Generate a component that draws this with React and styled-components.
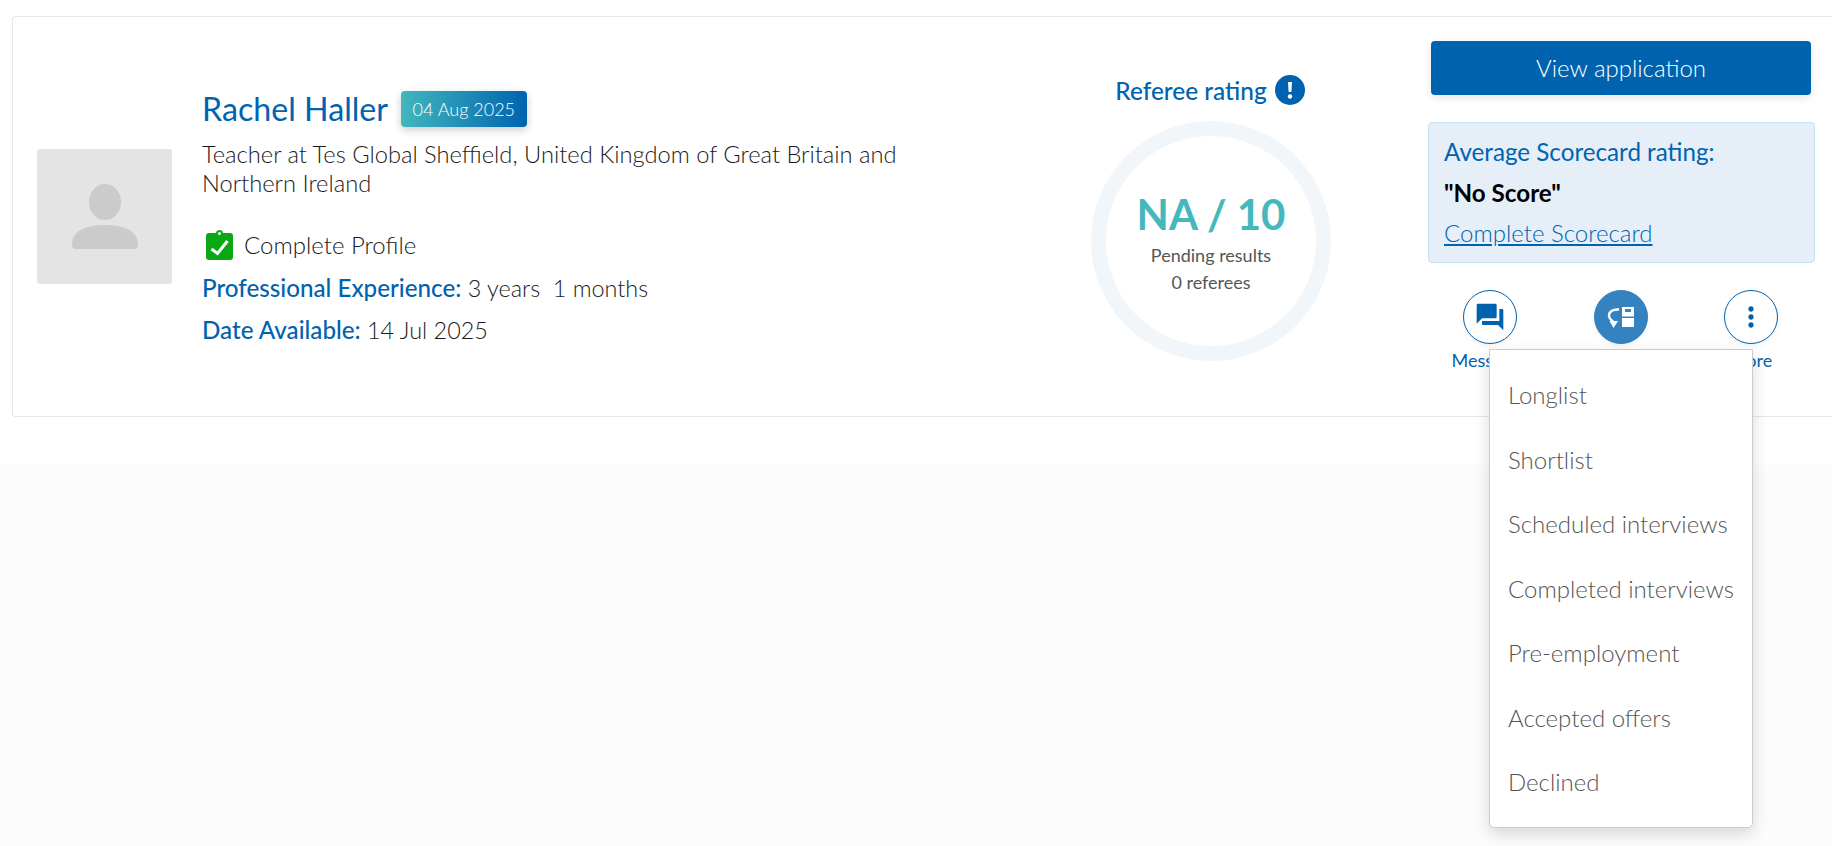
import React from "react";
import styled, { createGlobalStyle } from "styled-components";
import { MdQuestionAnswer, MdMoreVert } from "react-icons/md";

const blue = "#0063b0";

const GlobalStyle = createGlobalStyle`
  html, body {
    margin: 0;
    padding: 0;
    height: 100%;
    background: #fcfcfc;
    font-family: "Lato", "Liberation Sans", sans-serif;
    overflow: hidden;
  }
`;

const TopSection = styled.section`
  background: #fff;
  padding: 16px 0 48px 12px;
`;

const Card = styled.div`
  display: flex;
  align-items: stretch;
  box-sizing: border-box;
  height: 401px;
  padding: 24px 17px 0 24px;
  background: #fff;
  border: 1px solid #e6e6e6;
  border-right: none;
  border-radius: 4px 0 0 4px;
`;

const AvatarColumn = styled.div`
  display: flex;
  align-items: center;
  padding-bottom: 24px;
  margin-right: 30px;
`;

const Avatar = styled.div`
  display: flex;
  align-items: center;
  justify-content: center;
  width: 135px;
  height: 135px;
  background: #e4e4e4;
  border-radius: 3px;
`;

const Info = styled.div`
  flex: 1;
  padding-top: 49px;
  min-width: 0;
`;

const NameRow = styled.div`
  display: flex;
  align-items: center;
  gap: 13px;
`;

const Name = styled.a`
  color: ${blue};
  font-size: 32.2px;
  line-height: 38px;
`;

const DateBadge = styled.span`
  padding: 0 11.5px;
  height: 36px;
  line-height: 36px;
  color: #fff;
  font-size: 18px;
  font-weight: 300;
  border-radius: 4px;
  background: linear-gradient(90deg, #41b7bd, ${blue});
  box-shadow: 0 3px 8px rgba(0, 0, 0, 0.2);
`;

const Description = styled.p`
  margin: 11.5px 0 0;
  max-width: 720px;
  color: #1a1a1a;
  font-size: 23.7px;
  font-weight: 300;
  line-height: 29px;
`;

const ProfileRow = styled.div`
  display: flex;
  align-items: center;
  gap: 11px;
  margin: 32px 0 0 4px;
  color: #1a1a1a;
  font-size: 24px;
  font-weight: 300;
`;

const Detail = styled.div`
  margin-top: ${(p) => p.$top}px;
  color: #1a1a1a;
  font-size: 23.4px;
  font-weight: 300;
  line-height: 30px;
  white-space: pre;
`;

const DetailLabel = styled.span`
  color: ${blue};
  font-size: 24.2px;
  font-weight: 500;
`;

const RatingColumn = styled.div`
  display: flex;
  flex-direction: column;
  align-items: center;
  width: 240px;
  margin-right: 97px;
  padding-top: 34px;
`;

const RatingTitle = styled.div`
  display: flex;
  align-items: center;
  gap: 8px;
  height: 30px;
  padding-right: 2px;
  color: ${blue};
  font-size: 24.4px;
  font-weight: 500;
`;

const Ring = styled.div`
  display: flex;
  flex-direction: column;
  align-items: center;
  justify-content: center;
  box-sizing: border-box;
  width: 240px;
  height: 240px;
  margin-top: 16px;
  border: 15px solid #f1f6fb;
  border-radius: 50%;
`;

const Score = styled.div`
  color: #45b8bd;
  font-size: 42px;
  font-weight: 700;
  line-height: 55px;
`;

const RingNote = styled.div`
  color: #555;
  font-size: 18px;
  line-height: 27px;
`;

const ActionColumn = styled.div`
  width: 387px;
  flex-shrink: 0;
`;

const ViewButton = styled.button`
  display: block;
  box-sizing: border-box;
  width: 380px;
  height: 54px;
  margin: 0 0 0 3px;
  padding: 0 0 2px;
  color: #fff;
  font-family: inherit;
  font-size: 24px;
  font-weight: 300;
  background: ${blue};
  border: none;
  border-radius: 4px;
  box-shadow: 0 3px 8px rgba(0, 0, 0, 0.1);
`;

const ScoreBox = styled.div`
  box-sizing: border-box;
  height: 141px;
  margin-top: 27px;
  padding: 14px 15px;
  background: #e6eef7;
  border: 1px solid #c9dff2;
  border-radius: 4px;
`;

const ScoreLabel = styled.div`
  color: ${blue};
  font-size: 24.2px;
  line-height: 30px;
`;

const ScoreValue = styled.div`
  margin-top: 11px;
  color: #000;
  font-size: 24.2px;
  font-weight: 700;
  line-height: 30px;
`;

const ScoreLink = styled.a`
  display: inline-block;
  margin-top: 10px;
  color: ${blue};
  font-size: 24px;
  font-weight: 300;
  line-height: 30px;
  text-decoration: underline;
`;

const ActionRow = styled.div`
  display: flex;
  justify-content: space-between;
  margin: 27px 14px 0 12px;
`;

const Action = styled.div`
  display: flex;
  flex-direction: column;
  align-items: center;
  width: 100px;
`;

const ActionIcon = styled.div`
  display: flex;
  align-items: center;
  justify-content: center;
  box-sizing: border-box;
  width: 54px;
  height: 54px;
  color: ${(p) => (p.$active ? "#fff" : blue)};
  background: ${(p) => (p.$active ? "#3582c0" : "#fff")};
  border: 1px solid ${(p) => (p.$active ? "#3582c0" : blue)};
  border-radius: 50%;
  box-shadow: 0 2px 5px rgba(0, 0, 0, 0.06);
`;

const ActionLabel = styled.div`
  margin-top: 4px;
  color: ${blue};
  font-size: 18px;
  line-height: 24px;
`;

const PageWrap = styled.div`
  position: relative;
`;

const Menu = styled.ul`
  position: absolute;
  top: 349px;
  left: 1489px;
  width: 264px;
  box-sizing: border-box;
  margin: 0;
  padding: 13px 0 12px;
  list-style: none;
  background: #fff;
  border: 1px solid #ccc;
  border-radius: 0 0 5px 5px;
  box-shadow: 0 6px 16px rgba(0, 0, 0, 0.15);
`;

const MenuItem = styled.li`
  height: 64.5px;
  padding-left: 18px;
  color: #555;
  font-size: 24px;
  font-weight: 300;
  line-height: 64.5px;
`;

const PersonIcon = () => (
  <svg width="66" height="66" viewBox="0 0 66 66" fill="#cbcbcb">
    <ellipse cx="33" cy="18" rx="16" ry="18" />
    <path d="M0 60c0-14 16-19 33-19s33 5 33 19c0 3-1 5-4 5H4c-3 0-4-2-4-5z" />
  </svg>
);

const ClipboardIcon = () => (
  <svg width="27" height="30" viewBox="0 0 27 30">
    <path
      d="M3 3h7c0-4 7-4 7 0h7c2 0 3 1 3 3v21c0 2-1 3-3 3H3c-2 0-3-1-3-3V6c0-2 1-3 3-3z"
      fill="#0aa814"
    />
    <circle cx="13.500" cy="3.500" r="1.500" fill="#fff" />
    <path d="M5.500 19l6 4.500L21.500 11" fill="none" stroke="#fff" strokeWidth="3" />
  </svg>
);

const AlertIcon = () => (
  <svg width="30" height="30" viewBox="0 0 30 30">
    <circle cx="15" cy="15" r="15" fill={blue} />
    <path d="M13 7h4l-.6 10h-2.800z" fill="#fff" />
    <circle cx="15" cy="21.500" r="2.200" fill="#fff" />
  </svg>
);

const MoveIcon = () => (
  <svg width="30" height="30" viewBox="0 0 30 30" fill="#fff">
    <path d="M16 5h12v9.500H16zM19 7v3h6V7z" fillRule="evenodd" />
    <path d="M16 16h12v9H16z" />
    <path
      d="M13 7.500C6.500 7 2.800 10 3 14c.1 2 2 4 4.500 6"
      fill="none"
      stroke="#fff"
      strokeWidth="2.400"
    />
    <path d="M3.500 19H12l-4.500 7z" />
  </svg>
);

const stages = [
  "Longlist",
  "Shortlist",
  "Scheduled interviews",
  "Completed interviews",
  "Pre-employment",
  "Accepted offers",
  "Declined",
];

export default function App() {
  return (
    <>
      <GlobalStyle />
      <PageWrap>
        <TopSection>
          <Card>
            <AvatarColumn>
              <Avatar>
                <PersonIcon />
              </Avatar>
            </AvatarColumn>
            <Info>
              <NameRow>
                <Name>Rachel Haller</Name>
                <DateBadge>04 Aug 2025</DateBadge>
              </NameRow>
              <Description>
                Teacher at Tes Global Sheffield, United Kingdom of Great Britain
                and Northern Ireland
              </Description>
              <ProfileRow>
                <ClipboardIcon />
                Complete Profile
              </ProfileRow>
              <Detail $top={13}>
                <DetailLabel>Professional Experience:</DetailLabel> 3 years  1 months
              </Detail>
              <Detail $top={12}>
                <DetailLabel>Date Available:</DetailLabel> 14 Jul 2025
              </Detail>
            </Info>
            <RatingColumn>
              <RatingTitle>
                Referee rating
                <AlertIcon />
              </RatingTitle>
              <Ring>
                <Score>NA / 10</Score>
                <RingNote>Pending results</RingNote>
                <RingNote>0 referees</RingNote>
              </Ring>
            </RatingColumn>
            <ActionColumn>
              <ViewButton>View application</ViewButton>
              <ScoreBox>
                <ScoreLabel>Average Scorecard rating:</ScoreLabel>
                <ScoreValue>"No Score"</ScoreValue>
                <ScoreLink>Complete Scorecard</ScoreLink>
              </ScoreBox>
              <ActionRow>
                <Action>
                  <ActionIcon>
                    <MdQuestionAnswer size={32} />
                  </ActionIcon>
                  <ActionLabel>Messages</ActionLabel>
                </Action>
                <Action>
                  <ActionIcon $active>
                    <MoveIcon />
                  </ActionIcon>
                  <ActionLabel>Move</ActionLabel>
                </Action>
                <Action>
                  <ActionIcon>
                    <MdMoreVert size={32} />
                  </ActionIcon>
                  <ActionLabel>More</ActionLabel>
                </Action>
              </ActionRow>
            </ActionColumn>
          </Card>
        </TopSection>
        <Menu>
          {stages.map((stage) => (
            <MenuItem key={stage}>{stage}</MenuItem>
          ))}
        </Menu>
      </PageWrap>
    </>
  );
}
